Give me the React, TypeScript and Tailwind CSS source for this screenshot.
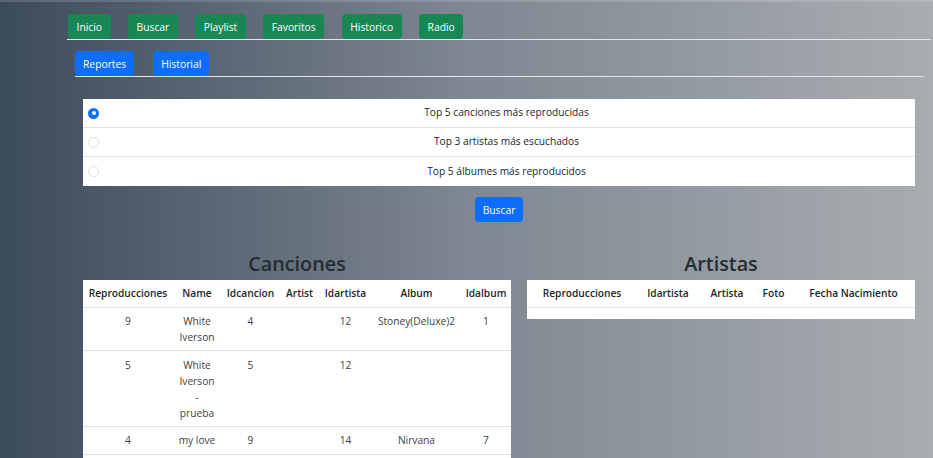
import React from "react";

const font = { fontFamily: '"Open Sans", "Noto Sans", sans-serif' };

function NavBtn({ label, color }: { label: string; color: "green" | "blue" }) {
  return (
    <button
      className={
        color === "green"
          ? "h-[25px] px-[8.5px] rounded-[4px] bg-[#198754] text-white text-[10.3px] leading-[16px]"
          : "h-[25px] px-2 rounded-[4px] bg-[#0d6efd] text-white text-[10.3px] leading-[16px]"
      }
    >
      {label}
    </button>
  );
}

function RadioRow({ label, checked, last }: { label: string; checked?: boolean; last?: boolean }) {
  return (
    <div className={"flex items-center h-[29px] pl-[5px] pr-[6px] " + (last ? "" : "border-b border-[#dee2e6]")}>
      {checked ? (
        <span className="w-[11px] h-[11px] rounded-full bg-[#0d6efd] flex items-center justify-center">
          <span className="w-[4px] h-[4px] rounded-full bg-white" />
        </span>
      ) : (
        <span className="w-[11px] h-[11px] rounded-full border border-[#dee2e6] bg-white" />
      )}
      <span className="flex-1 text-center text-[10.2px] text-[#212529] pl-[5px]">{label}</span>
    </div>
  );
}

const songs = [
  { r: "9", name: ["White", "Iverson"], id: "4", artist: "", ida: "12", album: "Stoney(Deluxe)2", idal: "1" },
  { r: "5", name: ["White", "Iverson", "-", "prueba"], id: "5", artist: "", ida: "12", album: "", idal: "" },
  { r: "4", name: ["my love"], id: "9", artist: "", ida: "14", album: "Nirvana", idal: "7" },
];

export default function App() {
  return (
    <div
      style={font}
      className="w-full h-[458px] overflow-hidden bg-[linear-gradient(to_right,#3c4b5b_0%,#7e8792_50%,#a9adb1_100%)]"
    >
      <div className="h-[2px] bg-white/15" />
      <div className="ml-[67px] mr-[2px] mt-[12px] flex gap-[17.5px] pl-[1px] border-b border-[#e3e6ea]">
        <NavBtn label="Inicio" color="green" />
        <NavBtn label="Buscar" color="green" />
        <NavBtn label="Playlist" color="green" />
        <NavBtn label="Favoritos" color="green" />
        <NavBtn label="Historico" color="green" />
        <NavBtn label="Radio" color="green" />
      </div>
      <div className="ml-[75px] w-[849px] mt-[11px] flex gap-[19px] border-b border-[#e3e6ea]">
        <NavBtn label="Reportes" color="blue" />
        <NavBtn label="Historial" color="blue" />
      </div>

      <div className="ml-[83px] w-[832px] mt-[22px] bg-white">
        <RadioRow label="Top 5 canciones más reproducidas" checked />
        <RadioRow label="Top 3 artistas más escuchados" />
        <RadioRow label="Top 5 álbumes más reproducidos" last />
      </div>

      <div className="flex justify-center ml-[83px] w-[832px] mt-[11px]">
        <button className="h-[25px] px-2 rounded-[4px] bg-[#0d6efd] text-white text-[10.3px] leading-[16px]">
          Buscar
        </button>
      </div>

      <div className="ml-[83px] w-[832px] mt-[29px] flex gap-[16px] items-start">
        <div className="w-[428px]">
          <h2 className="text-center text-[19.8px] leading-[26px] font-semibold text-[#262c33] mb-[3px]">Canciones</h2>
          <table className="w-[428px] table-fixed bg-white text-[10.2px] leading-[16px] text-[#212529] border-collapse">
            <colgroup>
              <col className="w-[90px]" />
              <col className="w-[48px]" />
              <col className="w-[59px]" />
              <col className="w-[39px]" />
              <col className="w-[53px]" />
              <col className="w-[89px]" />
              <col className="w-[50px]" />
            </colgroup>
            <thead>
              <tr className="border-b border-[#dee2e6]">
                {["Reproducciones", "Name", "Idcancion", "Artist", "Idartista", "Album", "Idalbum"].map((h) => (
                  <th key={h} className="px-0 py-[5.33px] font-semibold text-center whitespace-nowrap">
                    {h}
                  </th>
                ))}
              </tr>
            </thead>
            <tbody>
              {songs.map((s, i) => (
                <tr key={i} className="border-b border-[#dee2e6] align-top text-[#3a3f44]">
                  <td className="py-[5.33px] text-center">{s.r}</td>
                  <td className="py-[5.33px] text-center">
                    {s.name.map((n, j) => (
                      <div key={j}>{n}</div>
                    ))}
                  </td>
                  <td className="py-[5.33px] text-center">{s.id}</td>
                  <td className="py-[5.33px] text-center">{s.artist}</td>
                  <td className="py-[5.33px] text-center">{s.ida}</td>
                  <td className="py-[5.33px] text-center whitespace-nowrap">{s.album}</td>
                  <td className="py-[5.33px] text-center">{s.idal}</td>
                </tr>
              ))}
              <tr>
                <td colSpan={7} className="h-[27px] p-0" />
              </tr>
            </tbody>
          </table>
        </div>
        <div className="w-[388px]">
          <h2 className="text-center text-[19.8px] leading-[26px] font-semibold text-[#262c33] mb-[3px]">Artistas</h2>
          <table className="w-[388px] table-fixed bg-white text-[10.2px] leading-[16px] text-[#212529] border-collapse">
            <colgroup>
              <col className="w-[110px]" />
              <col className="w-[62px]" />
              <col className="w-[56px]" />
              <col className="w-[37px]" />
              <col className="w-[123px]" />
            </colgroup>
            <thead>
              <tr className="border-b border-[#dee2e6]">
                {["Reproducciones", "Idartista", "Artista", "Foto", "Fecha Nacimiento"].map((h) => (
                  <th key={h} className="px-0 py-[5.33px] font-semibold text-center whitespace-nowrap">
                    {h}
                  </th>
                ))}
              </tr>
            </thead>
            <tbody>
              <tr>
                <td colSpan={5} className="h-[12px] p-0" />
              </tr>
            </tbody>
          </table>
        </div>
      </div>
    </div>
  );
}
